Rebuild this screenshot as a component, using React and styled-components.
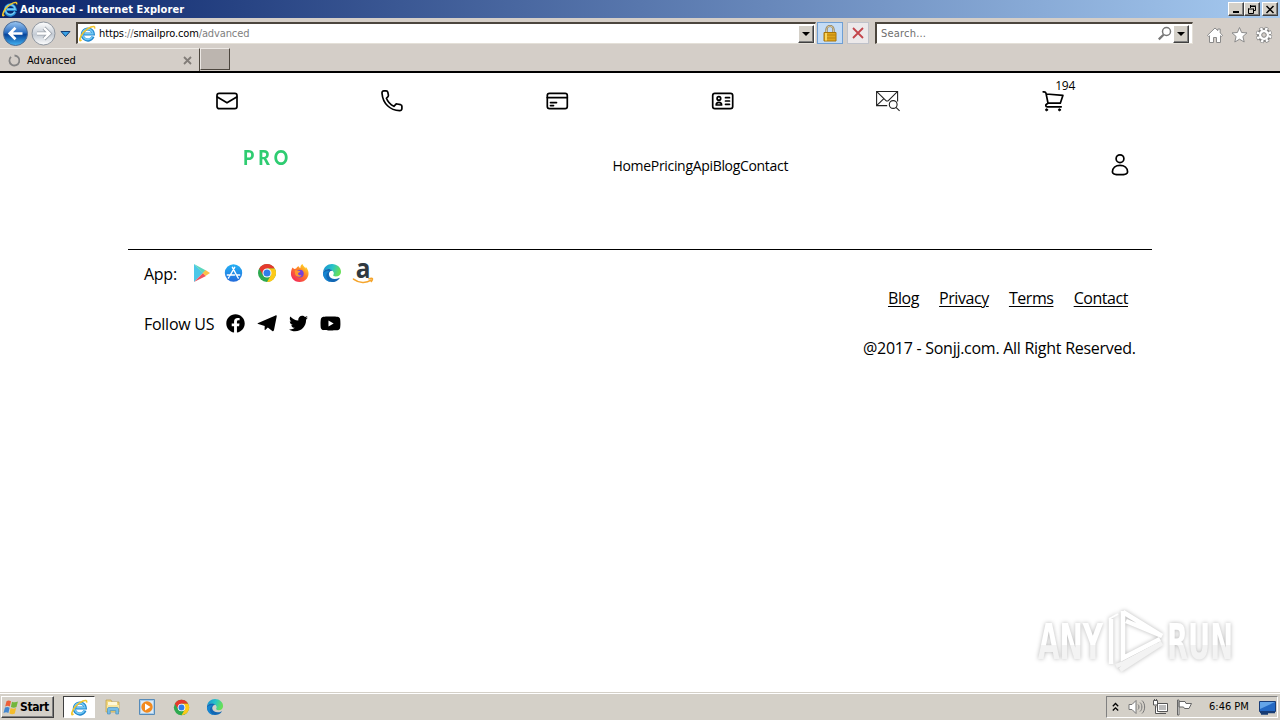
import React from "react";
import styled, { createGlobalStyle, css } from "styled-components";
import { FaFacebook, FaTwitter, FaYoutube } from "react-icons/fa";

const GlobalStyle = createGlobalStyle`
  * {
    box-sizing: border-box;
  }
  body {
    margin: 0;
    background: #fff;
    color: #000;
    overflow: hidden;
    font-family: "Open Sans", "Noto Sans", sans-serif;
  }
  svg {
    display: block;
    flex: none;
    overflow: visible;
  }
`;

const tahoma = css`
  font-family: "DejaVu Sans Condensed", "DejaVu Sans", sans-serif;
  font-stretch: condensed;
  font-size: 11px;
  line-height: 14px;
  white-space: pre;
`;
const raised = css`
  border: 1px solid;
  border-color: #fff #404040 #404040 #fff;
  box-shadow: inset -1px -1px 0 #808080;
  background: #d4d0c8;
`;

const Screen = styled.div`
  width: 1280px;
  height: 720px;
  display: flex;
  flex-direction: column;
`;

/* window chrome */
const TitleBar = styled.div`
  ${tahoma}
  height: 18px;
  display: flex;
  align-items: center;
  padding: 0 2px;
  background: linear-gradient(to right, #0a246a, #a6caf0);
`;
const TitleText = styled.span`
  flex: 1;
  margin-left: 2px;
  padding-top: 1px;
  color: #fff;
  font-weight: 700;
  letter-spacing: 0.1px;
`;
const WindowButtons = styled.div`
  display: flex;
`;
const WindowButton = styled.div`
  ${raised}
  width: 16px;
  height: 14px;
  margin-left: ${(props) => props.$gap || 0}px;
  display: flex;
  align-items: center;
  justify-content: center;
`;
const AddressRow = styled.div`
  height: 30px;
  display: flex;
  align-items: center;
  padding: 0 7px 0 3px;
  background: #d4cec8;
`;
const Field = styled.div`
  ${tahoma}
  width: ${(props) => props.$width}px;
  height: 22px;
  margin-left: ${(props) => props.$left}px;
  padding: 0 ${(props) => props.$right}px 0 ${(props) => props.$pad}px;
  display: flex;
  align-items: center;
  background: #fff;
  border: 1px solid;
  border-width: 2px 1px 1px 2px;
  border-color: #4c463e #e4e0d8 #e4e0d8 #4c463e;
`;
const FieldText = styled.span`
  flex: 1;
  margin-left: ${(props) => props.$left}px;
  color: ${(props) => props.$color || "#808080"};
  letter-spacing: ${(props) => props.$spacing || 0}px;
  b {
    font-weight: 400;
    color: #000;
  }
`;
const DropButton = styled.div`
  ${raised}
  width: 16px;
  height: 18px;
  display: flex;
  align-items: center;
  justify-content: center;
`;
const ToolButton = styled.div`
  width: ${(props) => props.$width}px;
  height: 22px;
  margin-left: ${(props) => props.$left}px;
  display: flex;
  align-items: center;
  justify-content: center;
  border: 1px solid ${(props) => (props.$active ? "#6f9fd4" : "#bfc2ca")};
  background: ${(props) => (props.$active ? "#c4dcf6" : "#ece9ea")};
`;
const Tools = styled.div`
  display: flex;
  gap: 6px;
  margin: 3px 0 0 13px;
`;
const TabRow = styled.div`
  height: 25px;
  display: flex;
  align-items: flex-start;
  background: #d4cec8;
  border-bottom: 2px solid #000;
`;
const Tab = styled.div`
  ${tahoma}
  width: 200px;
  height: 23px;
  display: flex;
  align-items: center;
  padding: 0 7px 0 8px;
  border-right: 1px solid #4c463e;
  border-top: 1px solid #eeebe6;
`;
const TabText = styled.span`
  flex: 1;
  margin-left: 6px;
  padding-top: 1px;
`;
const NewTab = styled.div`
  width: 30px;
  height: 22px;
  background: #bcb5af;
  border: 1px solid;
  border-color: #ece8e4 #4c463e #4c463e #ece8e4;
`;

/* page */
const Page = styled.main`
  flex: 1;
  width: 1024px;
  margin: 0 auto;
`;
const Services = styled.nav`
  height: 56px;
  padding: 0 16px;
  display: grid;
  grid-template-columns: repeat(6, 1fr);
  align-items: center;
  justify-items: center;
`;
const Cart = styled.div`
  position: relative;
`;
const CartCount = styled.span`
  position: absolute;
  left: 14px;
  top: -11px;
  font-size: 12px;
  line-height: 16px;
  letter-spacing: -0.3px;
`;
const Header = styled.header`
  height: 120px;
  padding: 0 20px 0 115px;
  display: flex;
  align-items: flex-start;
  justify-content: space-between;
`;
const Logo = styled.div`
  width: 48px;
  margin-top: 16px;
  font-family: Lato, sans-serif;
  font-size: 21.5px;
  line-height: 24px;
  font-weight: 900;
  letter-spacing: 5px;
  color: #2ecc71;
  white-space: nowrap;
  transform: scaleX(0.83);
  transform-origin: left;
`;
const Menu = styled.div`
  width: 176px;
  margin: 27px -2px 0 0;
  display: flex;
  font-size: 14px;
  line-height: 20px;
  letter-spacing: -0.32px;
`;
const Account = styled.div`
  margin-top: 24px;
`;
const Footer = styled.footer`
  display: flex;
  justify-content: space-between;
  border-top: 1px solid #000;
  padding: 0 16px;
  font-size: 16px;
  line-height: 24px;
  letter-spacing: -0.27px;
`;
const FooterRow = styled.div`
  height: 50px;
  padding-bottom: 2px;
  display: flex;
  align-items: center;
  white-space: nowrap;
`;
const Label = styled.span`
  width: ${(props) => props.$width}px;
`;
const Icons = styled.div`
  display: flex;
  align-items: center;
  gap: ${(props) => props.$gap}px;
  margin-bottom: 2px;
`;
const Legal = styled.div`
  width: 273px;
  padding-top: 24px;
`;
const Links = styled(FooterRow)`
  padding: 0 8px 2px 25px;
  justify-content: space-between;
  letter-spacing: -0.45px;
`;
const Link = styled.a`
  color: #000;
  text-decoration: underline;
  text-underline-offset: 2px;
  text-decoration-thickness: 1px;
`;
const Watermark = styled.svg`
  position: absolute;
  left: 1030px;
  top: 602px;
  filter: drop-shadow(0 0 2px rgba(0, 0, 0, 0.28));
`;

/* taskbar */
const Taskbar = styled.div`
  ${tahoma}
  height: 28px;
  display: flex;
  align-items: center;
  justify-content: space-between;
  padding: 1px 2px 0 1px;
  background: #d4d0c8;
  border-top: 1px solid #d4d0c8;
  box-shadow: inset 0 1px 0 #fff;
`;
const Launchers = styled.div`
  display: flex;
  align-items: center;
`;
const StartButton = styled.div`
  ${raised}
  width: 53px;
  height: 22px;
  display: flex;
  align-items: center;
  padding-left: 1px;
  font-weight: 700;
  font-size: 12px;
  letter-spacing: -0.4px;
`;
const Launcher = styled.div`
  width: 32px;
  height: 22px;
  margin-left: ${(props) => props.$left}px;
  display: flex;
  align-items: center;
  justify-content: center;
  ${(props) =>
    props.$pressed &&
    css`
      background: #fff;
      border: 1px solid;
      border-color: #404040 #fff #fff #404040;
    `}
`;
const Tray = styled.div`
  width: 172px;
  height: 22px;
  padding: 0 1px 0 5px;
  display: flex;
  align-items: center;
  border: 1px solid;
  border-color: #808080 #fff #fff #808080;
`;
const Clock = styled.span`
  width: 51px;
  margin-left: 16px;
`;
const TrayIcon = styled.div`
  margin-left: ${(props) => props.$left}px;
`;

const IeIcon = ({ size }) => (
  <svg width={size} height={size} viewBox="0 0 16 16" fill="none">
    <path d="M13.2 10.8A5.2 5.2 0 1 1 13.5 8.5H4.5" stroke="#2388cf" strokeWidth="2.9" />
    <path d="M12.8 10.4A4.9 4.9 0 1 1 13.1 8.3H5" stroke="#72c8f4" strokeWidth="1.5" />
    <path d="M2.3 13.8C-.5 17 .4 11.3 4.3 6.8S15.7-.8 14.7 3.4" stroke="#f2c52b" strokeWidth="1.5" />
  </svg>
);

const Arrow = () => (
  <svg width="8" height="4" viewBox="0 0 8 4">
    <path d="M0 0h8L4 4z" />
  </svg>
);

const NavButtons = () => (
  <svg width="68" height="28" viewBox="0 0 68 28">
    <defs>
      <linearGradient id="back" x2="0" y2="1">
        <stop offset="0" stopColor="#9cc7f1" />
        <stop offset=".45" stopColor="#2f71c4" />
        <stop offset=".55" stopColor="#07459b" />
        <stop offset="1" stopColor="#45b5f4" />
      </linearGradient>
      <linearGradient id="forward" x2="0" y2="1">
        <stop offset="0" stopColor="#fff" />
        <stop offset=".55" stopColor="#c4cbd4" />
        <stop offset="1" stopColor="#fff" />
      </linearGradient>
    </defs>
    <circle cx="12.5" cy="14.5" r="12" fill="url(#back)" stroke="#4c6b94" />
    <path d="M19.5 14.5H7M12.5 8.7 6.7 14.5l5.8 5.8" fill="none" stroke="#fff" strokeWidth="2.7" />
    <circle cx="40.5" cy="14.5" r="11.5" fill="url(#forward)" stroke="#8f969f" />
    <path d="M34 14.5h12M41 9l5.5 5.5-5.5 5.5" fill="none" stroke="#9da3ab" strokeWidth="4" />
    <path d="M34 14.5h12M41 9l5.5 5.5-5.5 5.5" fill="none" stroke="#fff" strokeWidth="2.4" />
    <path d="M58 12.5h9L62.5 17.5z" fill="#38a1e5" stroke="#123c73" />
  </svg>
);

const LockIcon = () => (
  <svg width="14" height="17" viewBox="0 0 14 17">
    <path d="M3.5 9V4.5a3.5 3.5 0 0 1 7 0V9" fill="none" stroke="#8b7650" strokeWidth="2.2" />
    <path d="M3.5 9V4.5a3.5 3.5 0 0 1 7 0V9" fill="none" stroke="#e9dcae" strokeWidth=".8" />
    <path d="M1 7.5h12V16H1z" fill="#dfa51c" stroke="#a87508" />
    <path d="M1.5 10h11M1.5 13h11" stroke="#b9830e" />
    <path d="M3 8v7.5" stroke="#f7d663" strokeWidth="2" />
  </svg>
);

const ToolIcons = () => (
  <Tools>
    <svg width="18" height="18" viewBox="0 0 18 18">
      <path d="M1.5 9.3 9 2l2.8 2.6V3h2.4v4l2.4 2.3-1.2 1.2-.9-.8v6.8h-4v-5H7.5v5h-4V9.7l-.8.8z" fill="#fff" stroke="#8a8a8a" />
    </svg>
    <svg width="18" height="18" viewBox="0 0 18 18">
      <path d="M9.5 1.5l2.1 5 5.4.4-4.1 3.6 1.3 5.5-4.7-2.8L4.8 16l1.3-5.5L2 6.9l5.4-.4z" fill="#fff" stroke="#8a8a8a" />
    </svg>
    <svg width="19" height="18" viewBox="0 0 19 18">
      <circle cx="10" cy="9" r="6.2" fill="none" stroke="#858585" strokeWidth="4" strokeDasharray="3.07 1.8" />
      <circle cx="10" cy="9" r="6" fill="none" stroke="#858585" strokeWidth="2" />
      <circle cx="10" cy="9" r="6.2" fill="none" stroke="#fff" strokeWidth="2.8" strokeDasharray="2.3 2.57" strokeDashoffset="-.4" />
      <circle cx="10" cy="9" r="5" fill="#fff" />
      <circle cx="10" cy="9" r="2.3" fill="#d4cec8" stroke="#858585" />
    </svg>
  </Tools>
);

const line = {
  fill: "none",
  stroke: "#000",
  strokeWidth: 1.7,
  strokeLinecap: "round",
  strokeLinejoin: "round",
};

const MailIcon = () => (
  <svg width="24" height="24" viewBox="0 0 24 24" {...line}>
    <rect x="2" y="4.3" width="20" height="15.4" rx="2.2" />
    <path d="M2.3 8 12 13.8 21.7 8" />
  </svg>
);
const PhoneIcon = () => (
  <svg width="24" height="24" viewBox="0 0 24 24" {...line}>
    <path d="M3.9 1.9h2.3c.8 0 1.4.5 1.6 1.3l.6 3c.1.7-.1 1.2-.6 1.6L6.4 9.3c1.5 3.9 3.8 6.2 7.5 8l1.6-1.7c.4-.5 1-.7 1.6-.6l3.5.7c.8.2 1.3.8 1.3 1.6v2.3c0 1.4-1 2.2-2.3 2.1C10.2 21.3 2.8 14.7 2 4.2c-.1-1.3.6-2.3 1.9-2.3z" />
  </svg>
);
const CardIcon = () => (
  <svg width="24" height="24" viewBox="0 0 24 24" {...line}>
    <rect x="2.3" y="4.3" width="20" height="15.4" rx="2.2" />
    <path d="M2.3 8.6h20M5.5 13.6h6M5.5 16.6h3" />
  </svg>
);
const IdIcon = () => (
  <svg width="24" height="24" viewBox="0 0 24 24" {...line}>
    <rect x="1.7" y="4.3" width="20" height="15.4" rx="2.2" />
    <circle cx="7.9" cy="9.4" r="1.8" />
    <path d="M5.2 16c0-3.6 5.4-3.6 5.4 0zM14.5 8.7h4M14.5 12h4M14.5 15.3h4" />
  </svg>
);
const MailSearchIcon = () => (
  <svg width="24" height="24" viewBox="0 0 24 24" fill="none" stroke="#222" strokeWidth="1.1">
    <path d="M11.2 16.6H.6V2.5h21v10M.8 2.7l8.9 8.6c.9.9 2 .9 2.9 0L21.4 2.7M.8 16.4l7.1-6.8" />
    <circle cx="17.2" cy="15.5" r="3.9" />
    <path d="m20 18.3 3.6 3.5" />
  </svg>
);
const CartIcon = () => (
  <svg width="24" height="24" viewBox="0 0 24 24" {...line}>
    <path d="M2.2 2.8h.9c1.1 0 1.7.6 1.9 1.5l2 9.9h12.3l2.6-7.8L5.3 5M7 14.2l-1.5 1c-1.2.8-.9 2.6.7 2.6h14" />
    <circle cx="5.6" cy="20.8" r="1.1" fill="#000" strokeWidth=".8" />
    <circle cx="18.5" cy="20.8" r="1.1" fill="#000" strokeWidth=".8" />
  </svg>
);
const UserIcon = () => (
  <svg width="24" height="24" viewBox="0 0 24 24" {...line}>
    <circle cx="12" cy="5.7" r="3.9" />
    <path d="M4.4 18.9c0-4 3.2-6.6 7.6-6.6s7.6 2.6 7.6 6.6c0 2-3.2 2.8-7.6 2.8s-7.6-.8-7.6-2.8z" />
  </svg>
);

const PlayStoreIcon = () => (
  <svg width="20" height="20" viewBox="0 0 20 20">
    <path d="M2 1v18l9-9z" fill="#4cc8e8" />
    <path d="M2 1l12 6.5-3 3z" fill="#5bd7bd" />
    <path d="M2 19l9-9 3 3z" fill="#ef5261" />
    <path d="M13.5 7 18 10l-4.5 3-2.8-3z" fill="#fcc04a" />
  </svg>
);
const AppStoreIcon = () => (
  <svg width="20" height="20" viewBox="0 0 20 20">
    <defs>
      <linearGradient id="appstore" x2="0" y2="1">
        <stop stopColor="#24b1f5" />
        <stop offset="1" stopColor="#226bdb" />
      </linearGradient>
    </defs>
    <circle cx="9.5" cy="10" r="8.7" fill="url(#appstore)" />
    <path d="m10.7 4.3-5 8.7M8.4 4.3l4.9 9.2M3.3 12h7.3M12.5 12h3.2M4.9 14.2l-.5.9M13.8 14.3l.5.8" stroke="#fff" strokeWidth="1.4" strokeLinecap="round" />
  </svg>
);
const ChromeIcon = ({ size = 20 }) => (
  <svg width={size} height={size} viewBox="0 0 20 20">
    <circle cx="10" cy="10" r="9" fill="#2da94f" />
    <path d="M2.2 5.5A9 9 0 0 1 17.8 5.5H10L6.1 12.2z" fill="#e5392d" />
    <path d="M17.8 5.5A9 9 0 0 1 10 19l3.9-6.75L10 5.5z" fill="#fdc918" />
    <circle cx="10" cy="10" r="4.5" fill="#fff" />
    <circle cx="10" cy="10" r="3.5" fill="#2f7de9" />
  </svg>
);
const FirefoxIcon = () => (
  <svg width="20" height="20" viewBox="0 0 20 20">
    <defs>
      <linearGradient id="fox" x1="1" x2=".2" y2="1">
        <stop offset=".1" stopColor="#ffe226" />
        <stop offset=".5" stopColor="#ff7a25" />
        <stop offset="1" stopColor="#f3255d" />
      </linearGradient>
    </defs>
    <g transform="translate(.8 0)">
      <path d="M2.7 4.5 4.4 6l2-.4C7.2 4 8.2 3.4 9 3.3c.3 1 .7 1.4 1.6 1.9C10.4 3.6 11.1 2 12.7 1c.5 2 2 2.8 3 4.4l.3-1.6c3.3 3.7 3.6 8.2 1.1 11.6-3.6 4.9-11.3 4.6-14.5 0C.4 12.1 1 7.5 2.7 4.5z" fill="url(#fox)" />
      <circle cx="10" cy="10.6" r="3.9" fill="#7542d8" />
      <path d="M5 7.5c1.3-.5 2.7-.4 3.5.3 1 .1 2 .2 2.1.8-.4.9-2 .9-2.3 1.7-.3 1.9 1.9 2.6 3.5 1.6-1.5 3-6 2-6.5-.8z" fill="#ff982f" />
    </g>
  </svg>
);
const EdgeIcon = ({ size = 20, id }) => (
  <svg width={size} height={size} viewBox="0 0 20 20">
    <defs>
      <linearGradient id={id} x2="1" y2=".3">
        <stop stopColor="#168bd2" />
        <stop offset=".55" stopColor="#29c3c9" />
        <stop offset="1" stopColor="#66df59" />
      </linearGradient>
    </defs>
    <path d="M1.1 9C1.7 4.2 5.4 1 10 1c5.2 0 9 3.7 9 7.8 0 3-2.3 4.7-5 4.7-2.2 0-3.3-.8-2.6-1.7.7-1 .6-2.7-.7-3.9C8 5.5 3.3 5.6 1.1 9z" fill={`url(#${id})`} />
    <path d="M1.1 9C2.6 5.8 8.2 5 10.7 7.9 8.3 7.2 6.5 9.5 7 12c.7 3.6 5.6 5.2 10.1 2.9.4-.2.7.1.4.5C15.8 17.8 13 19 10 19 4.3 19 .7 14.2 1.1 9z" fill="#1267b4" />
    <path d="M7.8 8.5C5.3 9 3.9 11.7 4.5 14.3c.5 2.4 2.5 4 5 4.7-4.8 0-8.4-3.8-8.5-8.5 1.1-2 4.2-3 6.8-2z" fill="#1785d0" />
  </svg>
);
const AmazonIcon = () => (
  <svg width="22" height="22" viewBox="0 0 22 22">
    <text x="1.8" y="15.5" fontFamily="Open Sans, sans-serif" fontSize="26" fontWeight="700" textLength="14.5" lengthAdjust="spacingAndGlyphs" fill="#303940">a</text>
    <path d="M-.5 17.1c5.4 4.2 13 4.300 17.5 1.100M15 16.700c1.700-.4 3.200-.4 3.400 0 .2.500-.3 1.800-1.100 2.800" fill="none" stroke="#f5a52d" strokeWidth="1.6" strokeLinecap="round" />
  </svg>
);
const TelegramIcon = () => (
  <svg width="20" height="20" viewBox="0 0 20 20">
    <path d="M1.2 9.900 18.500 2.400c.8-.3 1.400.2 1.200 1.200l-2.700 13.500c-.2 1-.9 1.300-1.700.8l-4.500-3.300-2.300 2.200c-.5.400-.9.200-.9-.4l.1-3.500-6.400-1.900c-1-.3-1-.8-.1-1.100z" />
  </svg>
);

const AnyRun = () => (
  <Watermark width="214" height="78" viewBox="0 0 214 78" fill="none" stroke="#fff">
    <defs>
      <linearGradient id="letters" x2="0" y2="1">
        <stop offset=".55" stopColor="#fff" />
        <stop offset=".56" stopColor="#f3f3f3" />
      </linearGradient>
    </defs>
    <g fill="url(#letters)" stroke="none" fontFamily="DejaVu Sans Condensed, sans-serif" fontSize="50" fontWeight="700">
      <text x="8" y="57" textLength="65" lengthAdjust="spacingAndGlyphs">ANY</text>
      <text x="137" y="57" textLength="66" lengthAdjust="spacingAndGlyphs">RUN</text>
    </g>
    <path d="M90 68l42-27M86 64l8-3 34-18" stroke="#f3f3f3" strokeWidth="4.5" />
    <path d="M93 9v47l37-19M81 17v45M93 10l39 24-36-15" strokeWidth="4.5" />
    <path d="M79 17l9-5" strokeWidth="2" />
  </Watermark>
);

const WindowsFlag = () => (
  <svg width="17" height="17" viewBox="0 0 17 17">
    <path d="M3.5 2.2C5.2 1.1 6.5 1.5 8 2.3L6.8 7.6C5.2 6.7 4 6.6 2.2 7.5z" fill="#ed6038" />
    <path d="M9 2.7c1.7.9 3.5.9 5.9-.1L13.5 8c-1.9.9-3.7.9-5.6 0z" fill="#72b63d" />
    <path d="M2 8.6c1.7-.9 3-.8 4.6.1l-1.2 5.2c-1.6-.8-2.9-.9-4.9.1z" fill="#4287d0" />
    <path d="M7.6 9.1c1.8.9 3.4.9 5.5 0l-1.3 5.4c-1.9.9-3.5.8-5.4-.1z" fill="#f4bd2c" />
  </svg>
);
const FolderIcon = () => (
  <svg width="18" height="18" viewBox="0 0 18 18">
    <path d="M2 2h5l1 2h7v10H2z" fill="#f1d77c" stroke="#bf9e45" strokeWidth=".7" />
    <path d="M4 4h9v4H4z" fill="#fff8d8" />
    <path d="M3 7h12v4H3z" fill="#f8e6a0" />
    <path d="M3.5 16v-5c0-1 .6-1.5 1.5-1.5h8c.9 0 1.5.5 1.5 1.5v5h-2.7v-3.5H6.2V16z" fill="#75bde8" stroke="#4a90bd" strokeWidth=".7" />
  </svg>
);
const MediaIcon = () => (
  <svg width="18" height="18" viewBox="0 0 18 18">
    <path d="M1.5 1.5h15v15h-15z" fill="#a9cdea" stroke="#568bb9" />
    <path d="M3 3h12v12H3z" fill="#dceaf6" />
    <circle cx="9" cy="9" r="5.7" fill="#f28a1e" />
    <path d="m7 5.5 5.5 3.5L7 12.5z" fill="#fff" />
  </svg>
);

export default function App() {
  return (
    <Screen>
      <GlobalStyle />
      <TitleBar>
        <IeIcon size={16} />
        <TitleText>Advanced - Internet Explorer</TitleText>
        <WindowButtons>
          <WindowButton>
            <svg width="10" height="9"><path d="M2 6h6v2H2z" /></svg>
          </WindowButton>
          <WindowButton>
            <svg width="10" height="9" fill="none" stroke="#000">
              <path d="M3 1h6M3.5 0v3M3 1.5h5.5v4H7M1 4h5.5M1.5 3.5v5h5v-5" />
            </svg>
          </WindowButton>
          <WindowButton $gap={2}>
            <svg width="10" height="9" stroke="#000" strokeWidth="1.5"><path d="m1.5 1 7 7m0-7-7 7" /></svg>
          </WindowButton>
        </WindowButtons>
      </TitleBar>
      <AddressRow>
        <NavButtons />
        <Field $width={740} $left={5} $pad={1} $right={1}>
          <IeIcon size={17} />
          <FieldText $left={3} $spacing={-0.12}>
            <b>https</b>://<b>smailpro.com</b>/advanced
          </FieldText>
          <DropButton><Arrow /></DropButton>
        </Field>
        <ToolButton $active $width={26} $left={1}><LockIcon /></ToolButton>
        <ToolButton $width={22} $left={4}>
          <svg width="12" height="12" stroke="#c3454b" strokeWidth="1.8"><path d="m1 1 10 10M11 1 1 11" /></svg>
        </ToolButton>
        <Field $width={318} $left={6} $pad={4} $right={3}>
          <FieldText $left={0} $spacing={0.2} $color="#6e6e6e">Search...</FieldText>
          <svg width="15" height="15" viewBox="0 0 15 15" fill="none" stroke="#777">
            <circle cx="8.5" cy="5.5" r="4" strokeWidth="1.5" />
            <path d="m5.5 8.7-4.7 4.7" strokeWidth="2.2" />
          </svg>
          <DropButton><Arrow /></DropButton>
        </Field>
        <ToolIcons />
      </AddressRow>
      <TabRow>
        <Tab>
          <svg width="13" height="13" viewBox="0 0 13 13" fill="none" stroke="#848484" strokeWidth="1.8">
            <path d="M3 2.8a5 5 0 1 0 3.5-1.3" />
          </svg>
          <TabText>Advanced</TabText>
          <svg width="9" height="9" stroke="#817c78" strokeWidth="1.8"><path d="m1 1 7 7m0-7L1 8" /></svg>
        </Tab>
        <NewTab />
      </TabRow>

      <Page>
        <Services>
          <MailIcon />
          <PhoneIcon />
          <CardIcon />
          <IdIcon />
          <MailSearchIcon />
          <Cart>
            <CartIcon />
            <CartCount>194</CartCount>
          </Cart>
        </Services>
        <Header>
          <Logo>PRO</Logo>
          <Menu>
            {["Home", "Pricing", "Api", "Blog", "Contact"].map((item) => (
              <span key={item}>{item}</span>
            ))}
          </Menu>
          <Account><UserIcon /></Account>
        </Header>
        <Footer>
          <div>
            <FooterRow>
              <Label $width={47.5}>App:</Label>
              <Icons $gap={12.5}>
                <PlayStoreIcon />
                <AppStoreIcon />
                <ChromeIcon />
                <FirefoxIcon />
                <EdgeIcon id="edgeFooter" />
                <AmazonIcon />
              </Icons>
            </FooterRow>
            <FooterRow>
              <Label $width={82}>Follow US</Label>
              <Icons $gap={12}>
                <FaFacebook size={19} />
                <TelegramIcon />
                <FaTwitter size={19} />
                <FaYoutube size={21} />
              </Icons>
            </FooterRow>
          </div>
          <Legal>
            <Links>
              {["Blog", "Privacy", "Terms", "Contact"].map((item) => (
                <Link key={item}>{item}</Link>
              ))}
            </Links>
            <FooterRow>@2017 - Sonjj.com. All Right Reserved.</FooterRow>
          </Legal>
        </Footer>
        <AnyRun />
      </Page>

      <Taskbar>
        <Launchers>
          <StartButton><WindowsFlag />Start</StartButton>
          <Launcher $left={9} $pressed><IeIcon size={17} /></Launcher>
          <Launcher $left={2}><FolderIcon /></Launcher>
          <Launcher $left={2}><MediaIcon /></Launcher>
          <Launcher $left={2}><ChromeIcon size={17} /></Launcher>
          <Launcher $left={2}><EdgeIcon size={18} id="edgeTask" /></Launcher>
        </Launchers>
        <Tray>
          <svg width="7" height="10" fill="none" stroke="#000" strokeWidth="1.3">
            <path d="M.8 4.2 3.5 1.5l2.7 2.7M.8 8.5l2.7-2.7 2.7 2.7" />
          </svg>
          <TrayIcon $left={9}>
            <svg width="17" height="16" viewBox="0 0 17 16" fill="none" stroke="#777">
              <path d="M1 5.5h3l4-4v13l-4-4H1z" fill="#fff" />
              <path d="M10 5.5c1.3 1 1.3 4 0 5M12 3.5c2.5 2 2.5 7 0 9M14 1.5c3.5 3 3.5 10 0 13" />
            </svg>
          </TrayIcon>
          <TrayIcon $left={7}>
            <svg width="17" height="17" viewBox="0 0 17 17" fill="#fff" stroke="#555">
              <path d="M5.5 4.5h10v8h-10zM7 14.5h7M3.5 7v7.5H8M1.5 1.5h4V6h-4zM2.5 0v2M4.5 0v2" />
              <path d="M7 6h7v5H7z" fill="#bbb" stroke="none" />
            </svg>
          </TrayIcon>
          <TrayIcon $left={7}>
            <svg width="17" height="17" viewBox="0 0 17 17" fill="#fff" stroke="#666">
              <path d="M1.5 1v15h1.5V1zM3 2.5h6l1 2h5.5L13 9.5H8.5l-1-1.5H3z" />
            </svg>
          </TrayIcon>
          <Clock>6:46 PM</Clock>
          <svg width="17" height="15" viewBox="0 0 17 15">
            <path d="M.5 1.5h16v10H.5z" fill="#2469c3" stroke="#183d78" />
            <path d="M1 2h15L1 9z" fill="#64a5e8" />
            <path d="M1 12.5h15M2 14h7" stroke="#173c73" strokeWidth="1.5" />
          </svg>
        </Tray>
      </Taskbar>
    </Screen>
  );
}
